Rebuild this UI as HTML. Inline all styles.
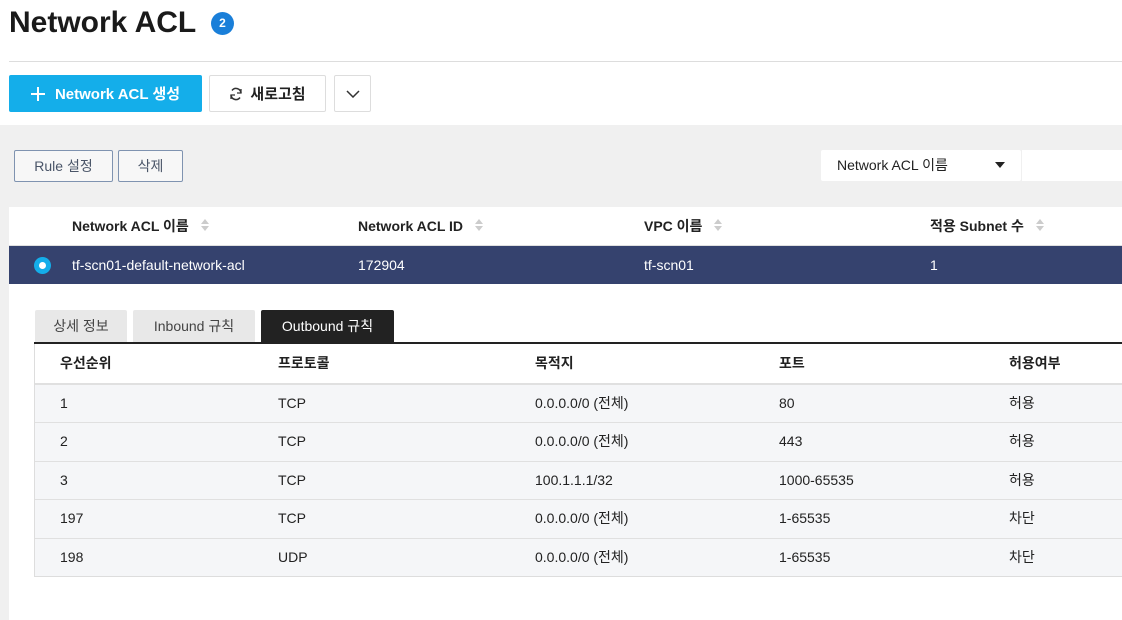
<!DOCTYPE html><html><head><meta charset="utf-8"><style>
body{margin:0;width:1122px;height:620px;overflow:hidden;background:#fff;font-family:"Liberation Sans","Noto Sans CJK KR",sans-serif;color:#222;position:relative}
.a{position:absolute}
.btn{position:absolute;box-sizing:border-box;display:flex;align-items:center;justify-content:center;font-size:15px;font-weight:bold;border-radius:2px}
.sb{position:absolute;box-sizing:border-box;border:1px solid #7f93b0;border-radius:2px;display:flex;align-items:center;justify-content:center;font-size:14px;color:#4a5568;background:#f7f7f7}
.cell{position:absolute;font-size:14px;line-height:38px}
.sort{display:inline-block;width:8px;height:14px;vertical-align:middle;margin-left:12px;position:relative;top:-2px}
.sort:before{content:"";position:absolute;left:0;top:-3px;border:4px solid transparent;border-bottom:5px solid #ccc}
.sort:after{content:"";position:absolute;left:0;top:8px;border:4px solid transparent;border-top:5px solid #ccc}
.tab{position:absolute;top:310px;height:32px;box-sizing:border-box;background:#e8e8e8;border-radius:2px 2px 0 0;font-size:14px;color:#444;display:flex;align-items:center;justify-content:center}
.row{position:absolute;left:35px;width:1100px;height:38px;background:#f5f6f8;border-top:1px solid #e0e0e0}
</style></head><body>
<div class="a" style="left:9px;top:6px;font-size:30px;font-weight:bold;color:#1a1a1a">Network ACL</div>
<div class="a" style="left:211px;top:12px;width:23px;height:23px;border-radius:50%;background:#1a7fd9;color:#fff;font-size:12px;font-weight:bold;text-align:center;line-height:23px">2</div>
<div class="a" style="left:9px;top:61px;width:1113px;height:1px;background:#ddd"></div>
<div class="btn" style="left:9px;top:75px;width:193px;height:37px;background:#14aeea;color:#fff"><svg width="14" height="14" style="margin-right:10px"><path d="M7 0v14M0 7h14" stroke="#fff" stroke-width="2"/></svg>Network ACL 생성</div>
<div class="btn" style="left:209px;top:75px;width:117px;height:37px;border:1px solid #ddd;color:#222"><svg width="14" height="14" viewBox="0 0 14 14" style="margin-right:7px"><path d="M12 6A5 5 0 0 0 3 3.5M2 8a5 5 0 0 0 9 2.5" fill="none" stroke="#333" stroke-width="1.5"/><path d="M12 2v4h-4M2 12V8h4" fill="none" stroke="#333" stroke-width="1.3"/></svg>새로고침</div>
<div class="btn" style="left:334px;top:75px;width:37px;height:37px;border:1px solid #ddd"><svg width="14" height="8"><path d="M1 1l6 6 6-6" fill="none" stroke="#333" stroke-width="1.5"/></svg></div>
<div class="a" style="left:0;top:125px;width:1122px;height:495px;background:#f0f0f0"></div>
<div class="sb" style="left:14px;top:150px;width:99px;height:32px">Rule 설정</div>
<div class="sb" style="left:118px;top:150px;width:65px;height:32px">삭제</div>
<div class="a" style="left:821px;top:150px;width:200px;height:31px;background:#fff;font-size:14px;line-height:31px;border-radius:2px"><span style="margin-left:16px">Network ACL 이름</span><span style="position:absolute;left:174px;top:12px;border:5px solid transparent;border-top:6px solid #222;border-bottom:0"></span></div>
<div class="a" style="left:1022px;top:150px;width:100px;height:31px;background:#fff"></div>
<div class="a" style="left:9px;top:207px;width:1113px;height:413px;background:#fff"></div>
<div class="cell" style="left:72px;top:207px;font-weight:bold">Network ACL 이름<span class="sort"></span></div>
<div class="cell" style="left:358px;top:207px;font-weight:bold">Network ACL ID<span class="sort"></span></div>
<div class="cell" style="left:644px;top:207px;font-weight:bold">VPC 이름<span class="sort"></span></div>
<div class="cell" style="left:930px;top:207px;font-weight:bold">적용 Subnet 수<span class="sort"></span></div>
<div class="a" style="left:9px;top:245px;width:1113px;height:1px;background:#e0e0e0"></div>
<div class="a" style="left:9px;top:246px;width:1113px;height:38px;background:#35426e"></div>
<div class="a" style="left:34px;top:257px;width:17px;height:17px;border-radius:50%;background:#14aeea"><div class="a" style="left:5px;top:5px;width:7px;height:7px;border-radius:50%;background:#fff"></div></div>
<div class="cell" style="left:72px;top:246px;color:#fff">tf-scn01-default-network-acl</div>
<div class="cell" style="left:358px;top:246px;color:#fff">172904</div>
<div class="cell" style="left:644px;top:246px;color:#fff">tf-scn01</div>
<div class="cell" style="left:930px;top:246px;color:#fff">1</div>
<div class="tab" style="left:35px;width:92px">상세 정보</div>
<div class="tab" style="left:133px;width:122px">Inbound 규칙</div>
<div class="tab" style="left:261px;width:133px;background:#222;color:#fff">Outbound 규칙</div>
<div class="a" style="left:34px;top:342px;width:1088px;height:2px;background:#222"></div>
<div class="cell" style="left:60px;top:344px;font-weight:bold">우선순위</div>
<div class="cell" style="left:278px;top:344px;font-weight:bold">프로토콜</div>
<div class="cell" style="left:535px;top:344px;font-weight:bold">목적지</div>
<div class="cell" style="left:779px;top:344px;font-weight:bold">포트</div>
<div class="cell" style="left:1009px;top:344px;font-weight:bold">허용여부</div>
<div class="row" style="top:383px;border-top:2px solid #e0e0e0;height:37px"></div>
<div class="row" style="top:422px"></div>
<div class="row" style="top:461px"></div>
<div class="row" style="top:499px"></div>
<div class="row" style="top:538px"></div>
<div class="a" style="left:34px;top:344px;width:1px;height:233px;background:#ddd"></div>
<div class="a" style="left:34px;top:576px;width:1088px;height:1px;background:#ddd"></div>
<div class="cell" style="left:60px;top:384px">1</div><div class="cell" style="left:278px;top:384px">TCP</div><div class="cell" style="left:535px;top:384px">0.0.0.0/0 (전체)</div><div class="cell" style="left:779px;top:384px">80</div><div class="cell" style="left:1009px;top:384px">허용</div>
<div class="cell" style="left:60px;top:422px">2</div><div class="cell" style="left:278px;top:422px">TCP</div><div class="cell" style="left:535px;top:422px">0.0.0.0/0 (전체)</div><div class="cell" style="left:779px;top:422px">443</div><div class="cell" style="left:1009px;top:422px">허용</div>
<div class="cell" style="left:60px;top:461px">3</div><div class="cell" style="left:278px;top:461px">TCP</div><div class="cell" style="left:535px;top:461px">100.1.1.1/32</div><div class="cell" style="left:779px;top:461px">1000-65535</div><div class="cell" style="left:1009px;top:461px">허용</div>
<div class="cell" style="left:60px;top:499px">197</div><div class="cell" style="left:278px;top:499px">TCP</div><div class="cell" style="left:535px;top:499px">0.0.0.0/0 (전체)</div><div class="cell" style="left:779px;top:499px">1-65535</div><div class="cell" style="left:1009px;top:499px">차단</div>
<div class="cell" style="left:60px;top:538px">198</div><div class="cell" style="left:278px;top:538px">UDP</div><div class="cell" style="left:535px;top:538px">0.0.0.0/0 (전체)</div><div class="cell" style="left:779px;top:538px">1-65535</div><div class="cell" style="left:1009px;top:538px">차단</div>
</body></html>
